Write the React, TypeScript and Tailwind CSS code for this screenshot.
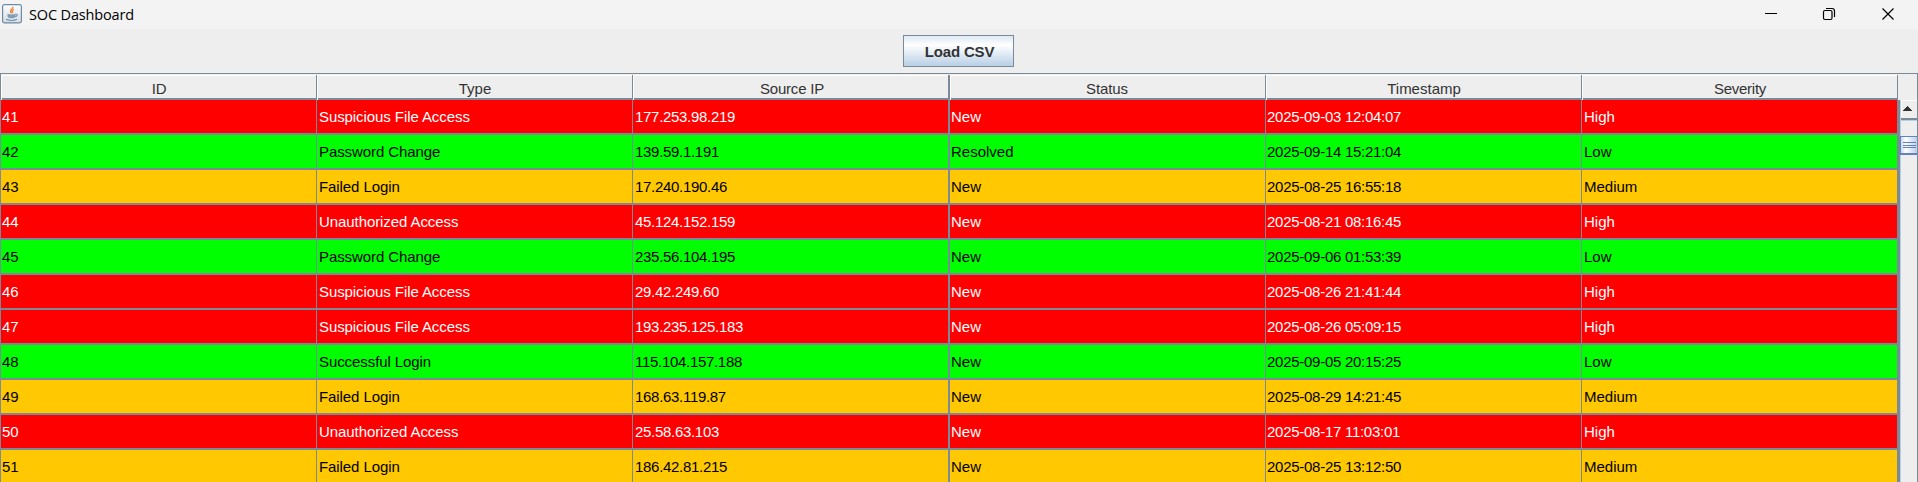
const HEADERS = ['ID', 'Type', 'Source IP', 'Status', 'Timestamp', 'Severity'];
const HEADER_TEXT = [
  'tracking-[-0.2px]',
  '',
  'tracking-[-0.2px] pl-[2px]',
  'tracking-[-0.1px] pr-[2px]',
  '',
  'tracking-[-0.25px]',
];

const SEPARATORS = ['border-r', 'border-r', 'border-r-2', 'border-r', 'border-r', 'border-r'];
const CELL_TEXT = [
  'pl-px tracking-[-0.2px]',
  'pl-[2px] tracking-[-0.08px]',
  'pl-[2px] tracking-[-0.3px]',
  'pl-px',
  'pl-px tracking-[-0.27px]',
  'pl-[2px]',
];

const ROWS = [
  ['41', 'Suspicious File Access', '177.253.98.219', 'New', '2025-09-03 12:04:07', 'High'],
  ['42', 'Password Change', '139.59.1.191', 'Resolved', '2025-09-14 15:21:04', 'Low'],
  ['43', 'Failed Login', '17.240.190.46', 'New', '2025-08-25 16:55:18', 'Medium'],
  ['44', 'Unauthorized Access', '45.124.152.159', 'New', '2025-08-21 08:16:45', 'High'],
  ['45', 'Password Change', '235.56.104.195', 'New', '2025-09-06 01:53:39', 'Low'],
  ['46', 'Suspicious File Access', '29.42.249.60', 'New', '2025-08-26 21:41:44', 'High'],
  ['47', 'Suspicious File Access', '193.235.125.183', 'New', '2025-08-26 05:09:15', 'High'],
  ['48', 'Successful Login', '115.104.157.188', 'New', '2025-09-05 20:15:25', 'Low'],
  ['49', 'Failed Login', '168.63.119.87', 'New', '2025-08-29 14:21:45', 'Medium'],
  ['50', 'Unauthorized Access', '25.58.63.103', 'New', '2025-08-17 11:03:01', 'High'],
  ['51', 'Failed Login', '186.42.81.215', 'New', '2025-08-25 13:12:50', 'Medium'],
];

const TONES: Record<string, string> = {
  High: 'bg-[#ff0000] text-white',
  Low: 'bg-[#00ff00] text-black',
  Medium: 'bg-[#ffc800] text-black',
};

const GRID = 'grid grid-cols-[316px_316px_317px_316px_316px_316px]';

function JavaIcon() {
  return (
    <svg width="20" height="20" viewBox="0 0 20 20" className="shrink-0">
      <defs>
        <linearGradient id="tile" x1="0" y1="0" x2="0" y2="1">
          <stop offset="0" stopColor="#fdfdfd" />
          <stop offset="1" stopColor="#d5dce3" />
        </linearGradient>
      </defs>
      <rect x="0.6" y="0.6" width="18.8" height="18.3" rx="1.8" fill="url(#tile)" stroke="#6d8ba5" strokeWidth="1.2" />
      <path d="M10.6 2.8c1.200 2-3.200 3-2 5 .4.8 1 1 1 1.800M12 5.300c-1.800 1-2.200 1.800-1.200 3.500" fill="none" stroke="#ee8a3c" strokeWidth="1.500" />
      <path d="M5.500 9.800q4 1.200 8 0v2.200c0 1.700-1.500 2.300-4 2.300s-4-.6-4-2.300z" fill="#7f9db6" />
      <path d="M13.500 10.300c2.500-.5 2.500 2-.5 2.500M4 15.300c3 1.300 8 1.300 11 0" fill="none" stroke="#6f91ad" strokeWidth="1.100" />
    </svg>
  );
}

function TitleBar() {
  return (
    <header className="flex h-[29px] shrink-0 items-start bg-[#f3f3f3] pl-[2px]">
      <div className="pt-1"><JavaIcon /></div>
      <h1 className="ml-[7px] pt-[4px] font-['Open_Sans',sans-serif] text-[14.500px] leading-[21px] tracking-[-0.15px] text-black">SOC Dashboard</h1>
      <div className="ml-auto flex pt-[7px] pr-[23px]">
        <svg width="14" height="14" className="mr-[44px]"><path d="M1 6.500h12" stroke="#000" /></svg>
        <svg width="14" height="14" className="mr-[45px]" fill="none" stroke="#000" strokeWidth="1.200">
          <rect x="1.500" y="3.500" width="8.500" height="9" rx="1.500" />
          <path d="M4 1.500h6q2.500 0 2.500 2.500v6" />
        </svg>
        <svg width="14" height="14" stroke="#000" strokeWidth="1.200"><path d="M1.500 1.500l11 11M12.500 1.500l-11 11" /></svg>
      </div>
    </header>
  );
}

function ScrollBar() {
  return (
    <div className="flex w-[17px] flex-col border-l border-[#b8cfe5] bg-[#eeeeee]">
      <div className="flex h-[18px] items-start border-t border-l border-white pt-[5px] pl-px">
        <svg width="9" height="5" shapeRendering="crispEdges"><path d="M4 0h1v1h1v1h1v1h1v1h1v1H0V4h1V3h1V2h1V1h1z" fill="#333" /></svg>
      </div>
      <div className="h-[2px] bg-[#7a8a99]" />
      <div className="h-[16px] border-t border-[#b8cfe5]" />
      <div className="-ml-px h-[19px] border-t border-b-2 border-l border-[#6382bf] bg-linear-to-r from-[#c8dbed] via-white via-30% to-[#b8cfe5] pt-[5px] pr-px pl-[2px]">
        <div className="h-px bg-[#6382bf]" />
        <div className="mt-[2px] h-px bg-[#6382bf]" />
        <div className="mt-px h-px bg-[#6382bf]" />
      </div>
    </div>
  );
}

export default function App() {
  return (
    <div className="flex h-[482px] w-[1918px] flex-col overflow-hidden bg-[#eeeeee] font-['Liberation_Sans',Arial,sans-serif] text-[15px]">
      <TitleBar />
      <div className="flex h-[44px] shrink-0 justify-center pt-[6px] pr-px">
        <button className="h-[32px] w-[111px] border border-[#7a8a99] bg-linear-to-b from-[#dde8f3] via-white via-30% to-[#b8cfe5] pt-[2px] pl-[2px] text-[15px] font-bold tracking-[-0.15px] text-[#333333]">Load CSV</button>
      </div>
      <main className="flex grow flex-col overflow-hidden border-x border-t border-[#7a8a99]">
        <div className={`${GRID} h-[26px] shrink-0 pt-px`}>
          {HEADERS.map((label, i) => (
            <div key={label} className={`${SEPARATORS[i]} border-[#7a8a99]`}>
              <div className={`${HEADER_TEXT[i]} flex h-full items-center justify-center border-t border-l border-white pt-px leading-[16px] text-[#333333] shadow-[inset_0_-2px_0_#7a8a99]`}>{label}</div>
            </div>
          ))}
        </div>
        <div className="flex">
          <div className="w-[1899px] shrink-0 border-r-2 border-[#7a8a99]">
            {ROWS.map((row) => (
              <div key={row[0]} className={`${GRID} h-[35px] ${TONES[row[5]]}`}>
                {row.map((cell, i) => (
                  <div key={i} className={`${SEPARATORS[i]} ${CELL_TEXT[i]} flex items-center border-b-2 border-[#7a8a99] pt-px whitespace-nowrap`}>{cell}</div>
                ))}
              </div>
            ))}
          </div>
          <ScrollBar />
        </div>
      </main>
    </div>
  );
}
